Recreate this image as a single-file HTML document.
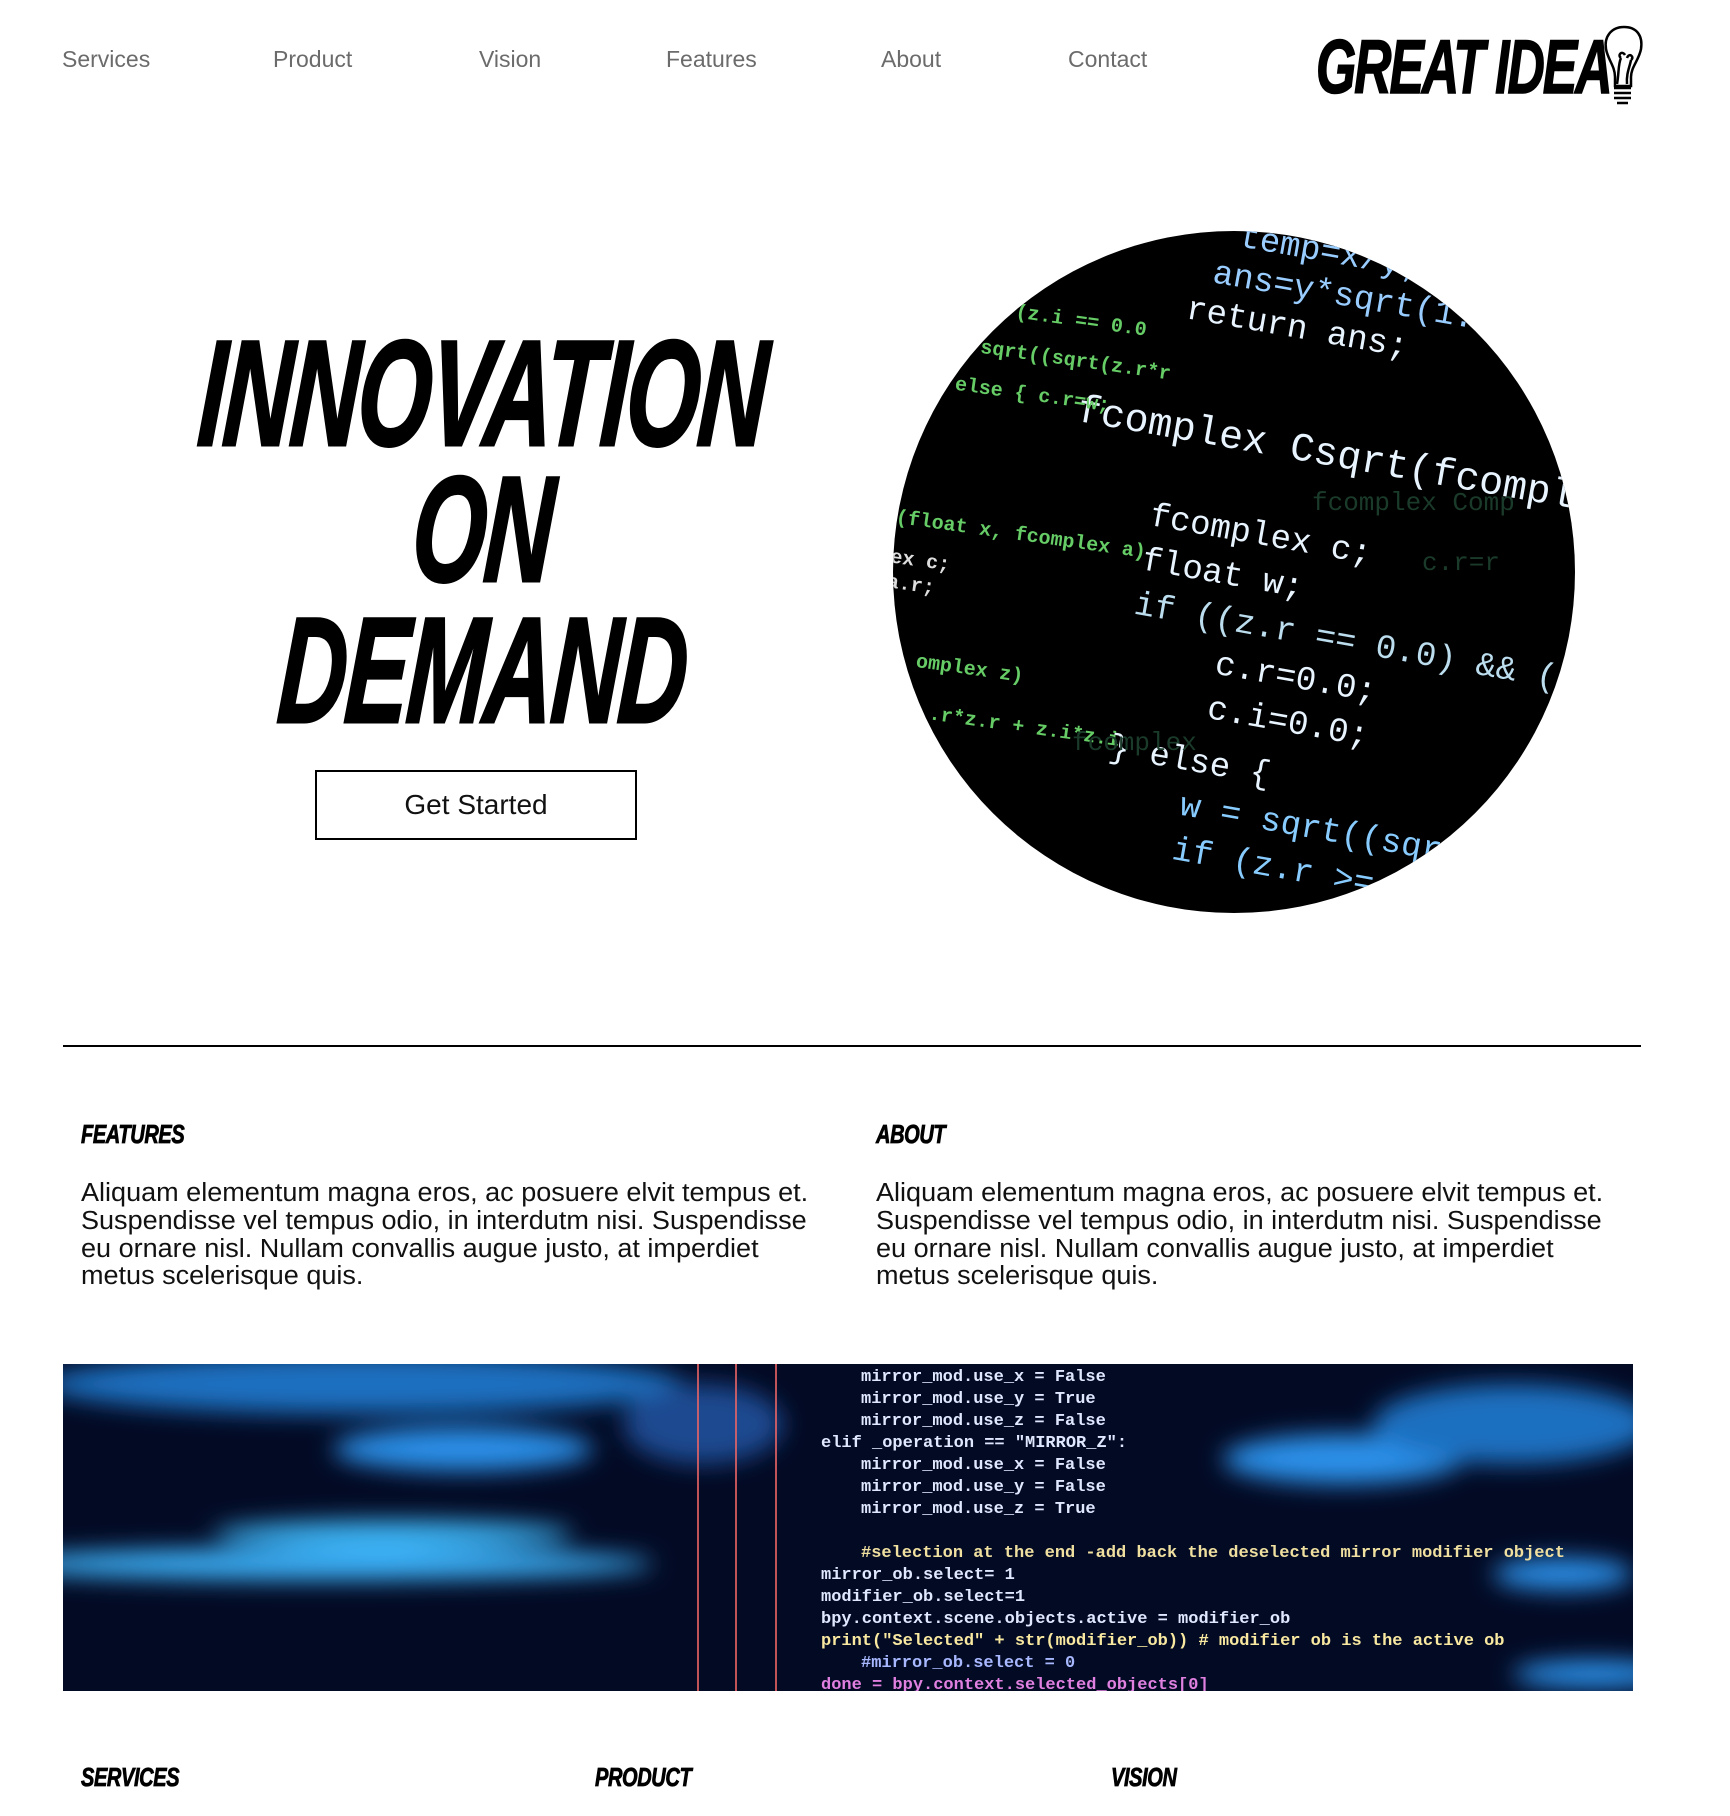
<!DOCTYPE html>
<html><head><meta charset="utf-8"><style>
*{margin:0;padding:0;box-sizing:border-box}
body{width:1730px;height:1816px;background:#fff;position:relative;overflow:hidden;font-family:"Liberation Sans",sans-serif}
.nav{position:absolute;top:46px;font-size:23px;color:#6b6b6b;transform:scaleX(1);transform-origin:left}
.big{position:absolute;left:483px;font-weight:bold;font-style:italic;font-size:150px;line-height:1;white-space:nowrap;transform:translateX(-50%) scaleX(.63) skewX(-6deg);color:#000;letter-spacing:-2px;-webkit-text-stroke:3px #000}
.h{position:absolute;font-weight:bold;font-style:italic;font-size:26px;transform:scaleX(.77);transform-origin:left;letter-spacing:-.5px;-webkit-text-stroke:.8px #000}
.p{position:absolute;top:1180px;font-size:25.5px;line-height:27.8px;color:#111;white-space:nowrap;transform:scaleX(1.06);transform-origin:left}
</style></head><body>
<div class="nav" style="left:62px">Services</div>
<div class="nav" style="left:273px">Product</div>
<div class="nav" style="left:479px">Vision</div>
<div class="nav" style="left:666px">Features</div>
<div class="nav" style="left:881px">About</div>
<div class="nav" style="left:1068px">Contact</div>
<div style="position:absolute;left:1316px;top:30px;font-weight:bold;font-style:italic;font-size:76px;line-height:1;letter-spacing:-3px;transform:scaleX(.68);transform-origin:left;white-space:nowrap;-webkit-text-stroke:1.5px #000">GREAT IDEA</div>
<svg style="position:absolute;left:1600px;top:24px" width="48" height="86" viewBox="0 0 48 86" fill="none" stroke="#000" stroke-width="2.5">
<path d="M24 3C11 3 4 13 6 25c2 11 9 17 9 28v9h16v-9c0-10 8-17 10-28C43 12 37 3 24 3z"/>
<path d="M17 60c2-10 1-20 4-26M27 60c-1-10 3-18 4-24M21 34c-4-3 1-8 4-3M31 36c4-3-2-8-4-2"/>
<path d="M14 64h17M14 69h17M14 74h17M17 79h11"/>
</svg>

<div class="big" style="top:318px">INNOVATION</div>
<div class="big" style="top:454px">ON</div>
<div class="big" style="top:595px">DEMAND</div>

<div style="position:absolute;left:315px;top:770px;width:322px;height:70px;border:2px solid #000;text-align:center;line-height:66px;font-size:28px;color:#111">Get Started</div>

<svg style="position:absolute;left:892px;top:230px" width="684" height="684" viewBox="0 0 684 684">
<defs><clipPath id="c"><circle cx="342" cy="342" r="341"/></clipPath></defs>
<g clip-path="url(#c)" font-family="Liberation Mono,monospace">
<rect width="684" height="684" fill="#000"/>
<g transform="rotate(10 340 340)" fill="#e8f4ff" font-size="34">
<text x="290" y="20" fill="#9cf">temp=x/y;</text>
<text x="270" y="60" fill="#9cf">ans=y*sqrt(1.0+temp*te</text>
<text x="250" y="100">return ans;</text>
<text x="160" y="220" font-size="40">fcomplex Csqrt(fcomplex z)</text>
<text x="250" y="310">fcomplex c;</text>
<text x="250" y="355">float w;</text>
<text x="250" y="400" fill="#bde">if ((z.r == 0.0) &amp;&amp; (z.i == 0.0)) {</text>
<text x="340" y="445">c.r=0.0;</text>
<text x="340" y="490">c.i=0.0;</text>
<text x="250" y="545">} else {</text>
<text x="330" y="590" fill="#8cf">w = sqrt((sqrt(z.r*z</text>
<text x="330" y="635" fill="#8cf">if (z.r &gt;= 0.0){</text>
</g>
<g fill="#6c6" font-size="20" font-weight="bold" transform="rotate(8 340 340)">
<text x="90" y="120">(z.i == 0.0</text>
<text x="60" y="160">sqrt((sqrt(z.r*r</text>
<text x="40" y="200">else {  c.r=w;</text>
<text x="0" y="340">(float x, fcomplex a)</text>
<text x="0" y="380" fill="#ddd">ex c;</text>
<text x="0" y="405" fill="#ddd">a.r;</text>
<text x="40" y="480">omplex z)</text>
<text x="60" y="530">.r*z.r + z.i*z.i</text>
</g>
<g fill="#1a3a2a" font-size="26"><text x="420" y="280">fcomplex Comp</text><text x="180" y="520">fcomplex</text><text x="530" y="340">c.r=r</text></g>
</g></svg>

<div style="position:absolute;left:63px;top:1045px;width:1578px;height:2px;background:#000"></div>

<div class="h" style="left:81px;top:1119px">FEATURES</div>
<div class="h" style="left:876px;top:1119px">ABOUT</div>
<div class="p" style="left:81px">Aliquam elementum magna eros, ac posuere elvit tempus et.<br>Suspendisse vel tempus odio, in interdutm nisi. Suspendisse<br>eu ornare nisl. Nullam convallis augue justo, at imperdiet<br>metus scelerisque quis.</div>
<div class="p" style="left:876px">Aliquam elementum magna eros, ac posuere elvit tempus et.<br>Suspendisse vel tempus odio, in interdutm nisi. Suspendisse<br>eu ornare nisl. Nullam convallis augue justo, at imperdiet<br>metus scelerisque quis.</div>

<svg style="position:absolute;left:63px;top:1364px" width="1570" height="327" viewBox="0 0 1570 327">
<defs><filter id="b"><feGaussianBlur stdDeviation="12"/></filter></defs>
<rect width="1570" height="327" fill="#030a24"/>
<g filter="url(#b)" fill="#2c8fe8">
<ellipse cx="300" cy="20" rx="320" ry="30" fill="#1f6fc0"/>
<ellipse cx="400" cy="85" rx="130" ry="22"/>
<ellipse cx="330" cy="170" rx="180" ry="14" fill="#3ab0f0"/>
<ellipse cx="260" cy="200" rx="330" ry="16" fill="#3aaef5"/>
<ellipse cx="1280" cy="95" rx="120" ry="25"/>
<ellipse cx="1450" cy="60" rx="140" ry="40" fill="#1f6fc0"/>
<ellipse cx="1500" cy="210" rx="70" ry="16"/>
<ellipse cx="1530" cy="310" rx="80" ry="14"/>
<ellipse cx="640" cy="60" rx="80" ry="40" fill="#1a4a90"/>
</g>
<g stroke="#e66" stroke-width="2" opacity=".8"><line x1="635" y1="0" x2="635" y2="327"/><line x1="673" y1="0" x2="673" y2="327"/><line x1="713" y1="0" x2="713" y2="327"/></g>
<g font-family="Liberation Mono,monospace" font-size="17" fill="#dfe8ff" font-weight="bold" transform="translate(18 3)">
<text x="780" y="14">mirror_mod.use_x = False</text>
<text x="780" y="36">mirror_mod.use_y = True</text>
<text x="780" y="58">mirror_mod.use_z = False</text>
<text x="740" y="80">elif _operation == "MIRROR_Z":</text>
<text x="780" y="102">mirror_mod.use_x = False</text>
<text x="780" y="124">mirror_mod.use_y = False</text>
<text x="780" y="146">mirror_mod.use_z = True</text>
<text x="780" y="190" fill="#f0e0a0">#selection at the end -add back the deselected mirror modifier object</text>
<text x="740" y="212">mirror_ob.select= 1</text>
<text x="740" y="234">modifier_ob.select=1</text>
<text x="740" y="256">bpy.context.scene.objects.active = modifier_ob</text>
<text x="740" y="278" fill="#f8e8a0">print("Selected" + str(modifier_ob)) # modifier ob is the active ob</text>
<text x="780" y="300" fill="#a8b8ff">#mirror_ob.select = 0</text>
<text x="740" y="322" fill="#e080e0">done = bpy.context.selected_objects[0]</text>
</g></svg>

<div class="h" style="left:81px;top:1762px">SERVICES</div>
<div class="h" style="left:595px;top:1762px">PRODUCT</div>
<div class="h" style="left:1111px;top:1762px">VISION</div>
</body></html>
